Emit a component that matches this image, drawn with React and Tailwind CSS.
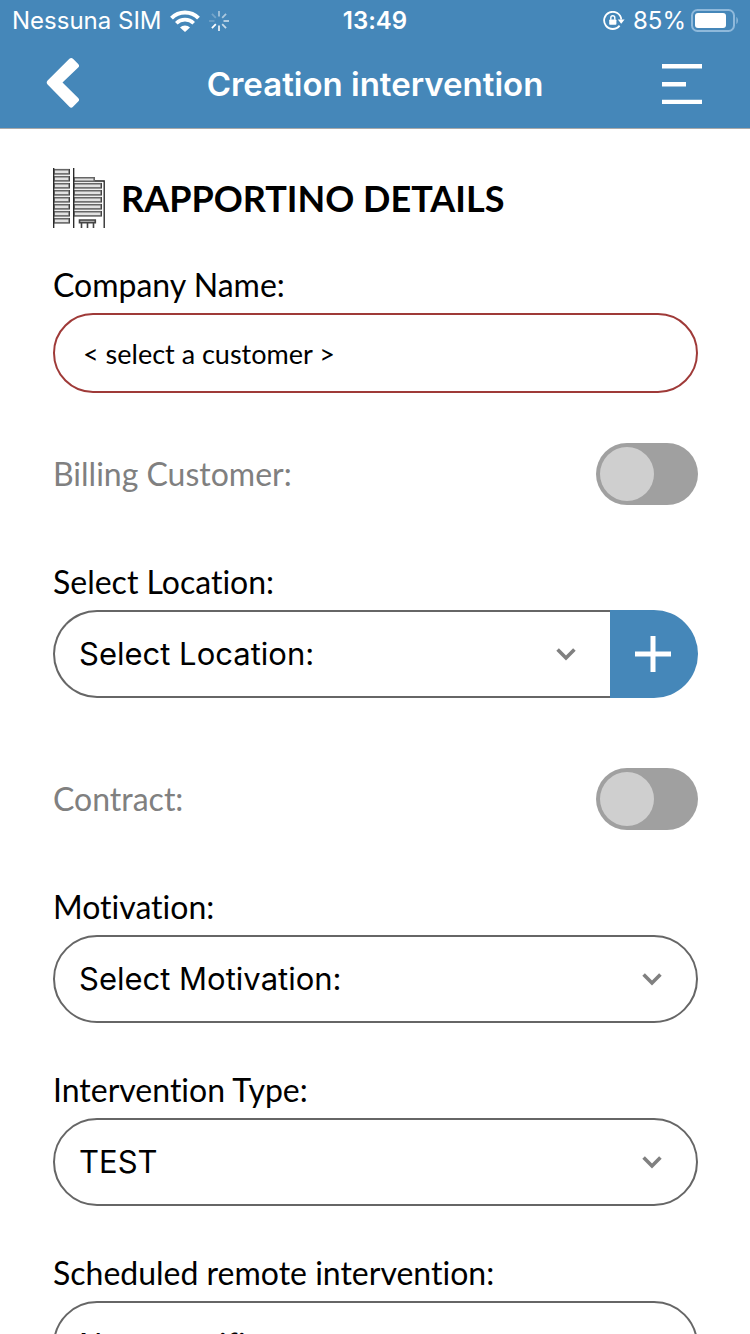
import React from "react";

const FLOORS = [1, 8, 15, 22, 29, 36, 43, 50];
const WINGS = [15, 22, 29, 36, 43];
const RAYS = [
  [0, 0.5],
  [45, 0.55],
  [90, 0.65],
  [135, 0.7],
  [180, 0.85],
  [225, 1],
  [270, 0.2],
  [315, 0.25],
];

function StatusBar() {
  return (
    <div className="grid h-10 grid-cols-3 items-center px-3 pt-0.5 font-['Inter','Liberation_Sans',sans-serif] text-2xl leading-9">
      <div className="flex items-center whitespace-nowrap">
        <span>Nessuna SIM</span>
        <svg className="ml-2 shrink-0" width="30" height="22" viewBox="0 0 30 22" fill="none" stroke="white" aria-hidden="true">
          <path d="M1.5 8.2a19 19 0 0 1 27 0" strokeWidth="4" />
          <path d="M6.3 13.2a12.3 12.3 0 0 1 17.4 0" strokeWidth="3.6" />
          <path d="M10 17.6a7 7 0 0 1 10 0L15 22z" fill="white" stroke="none" />
        </svg>
        <svg className="ml-2 shrink-0" width="22" height="22" viewBox="-11 -11 22 22" stroke="white" strokeWidth="1.8" aria-hidden="true">
          {RAYS.map(([angle, opacity]) => (
            <line key={angle} x1="0" y1="-4.5" x2="0" y2="-10" opacity={opacity} transform={`rotate(${angle})`} />
          ))}
        </svg>
      </div>
      <span className="text-center font-semibold">13:49</span>
      <div className="flex items-center justify-end whitespace-nowrap">
        <svg className="mr-2 shrink-0" width="22" height="20" viewBox="0 0 22 20" fill="none" aria-hidden="true">
          <path d="M16.600 14.600A8.6 8.6 0 1 1 18.300 8.600" stroke="white" strokeWidth="1.8" />
          <path d="M14.800 8.400h6.800L18.200 12.800z" fill="white" />
          <rect x="6.200" y="8.400" width="7.200" height="5.4" rx="0.8" fill="white" />
          <path d="M7.800 8.800V6.800a2 2 0 0 1 4 0v2" stroke="white" strokeWidth="1.4" />
        </svg>
        <span>85%</span>
        <svg className="ml-1 shrink-0" width="48" height="24" viewBox="0 0 48 24" aria-hidden="true">
          <rect x="2" y="1" width="42" height="21" rx="5.5" fill="none" stroke="#8fb9db" strokeWidth="2" />
          <rect x="5" y="4" width="31" height="15" rx="3" fill="white" />
          <path d="M46.400 8c2 1 2 6 0 7z" fill="#8fb9db" />
        </svg>
      </div>
    </div>
  );
}

function NavBar() {
  return (
    <div className="grid h-22 grid-cols-[1fr_auto_1fr] items-center px-[46px]">
      <button type="button" aria-label="Back" className="flex justify-self-start">
        <svg width="36" height="54" viewBox="0 0 36 54" fill="white" aria-hidden="true">
          <path d="M1.6 23.6 23.4 1.8q1.8-1.8 3.6 0l5.2 5.2q1.8 1.8 0 3.6L16.5 25.5 32.2 41q1.8 1.8 0 3.6l-5.2 5.2q-1.8 1.8-3.6 0L1.6 27.4q-1.8-1.9 0-3.8z" />
        </svg>
      </button>
      <h1 className="font-['Inter','Liberation_Sans',sans-serif] text-[33px] leading-10 font-semibold">Creation intervention</h1>
      <button type="button" aria-label="Menu" className="flex justify-self-end">
        <svg width="42" height="40" viewBox="0 0 42 40" fill="white" aria-hidden="true">
          <path d="M0 0h40v4.4H0zM0 18h24v4.6H0zM0 35.8h40V40H0z" />
        </svg>
      </button>
    </div>
  );
}

function BuildingIcon() {
  return (
    <svg className="shrink-0" width="52" height="60" viewBox="0 0 52 60" fill="#e2e2e2" stroke="#666" strokeWidth="1.6" aria-hidden="true">
      {FLOORS.map((y) => (
        <rect key={y} x="1" y={y + 0.7} width="15.2" height="4.200" />
      ))}
      <path d="M21 9.8h20.2v3.400H21z" />
      {WINGS.map((y) => (
        <rect key={y} x="21" y={y + 0.7} width="27.2" height="4.200" />
      ))}
      <path d="M26.5 52h15.800v2.800h-15.800z" stroke="#444" fill="#aaa" />
      <path d="M28.5 55v5M34.5 55v5M40.5 55v5" stroke="#444" />
      <path d="M16.500 1v5M16.500 8v5M16.500 15v5M16.500 22v5M16.500 29v5M16.500 36v5M16.500 43v5M16.500 50v5M48.500 15v5M48.500 22v5M48.500 29v5M48.500 36v5M48.500 43v5" stroke="#444" strokeWidth="1" />
      <path d="M.7 0v60M20.7 0v60M51.2 60V13H42" fill="none" stroke="#222" strokeWidth="1.3" />
    </svg>
  );
}

function Label({ htmlFor, children }) {
  return (
    <label htmlFor={htmlFor} className="mb-2 block text-[32px] leading-10">
      {children}
    </label>
  );
}

function Dropdown({ id, option, joined }) {
  return (
    <div className="relative min-w-0 flex-1">
      <select
        id={id}
        className={`block h-22 w-full appearance-none border-2 border-[#666] bg-white pr-20 pl-6 font-['Inter','Liberation_Sans',sans-serif] text-[31px] leading-10 text-black ${
          joined ? "rounded-l-full border-r-0" : "rounded-full"
        }`}
      >
        <option>{option}</option>
      </select>
      <svg
        className={`pointer-events-none absolute top-9 ${joined ? "right-[34px]" : "right-9"}`}
        width="20"
        height="16"
        viewBox="0 0 20 16"
        fill="none"
        stroke="#808080"
        strokeWidth="3.6"
        aria-hidden="true"
      >
        <path d="M1.6 3.5 10 12l8.400-8.500" />
      </svg>
    </div>
  );
}

function Toggle({ id, label }) {
  return (
    <div className="flex items-center justify-between">
      <label htmlFor={id} className="text-[32px] leading-10 text-[#808080]">
        {label}
      </label>
      <input
        id={id}
        type="checkbox"
        role="switch"
        disabled
        className="h-[62px] w-[102px] appearance-none rounded-full bg-[#a0a0a0] p-1 before:block before:size-[54px] before:rounded-full before:bg-[#cfcfcf] checked:before:ml-10"
      />
    </div>
  );
}

export default function App() {
  return (
    <div className="flex h-screen flex-col bg-white font-['Lato','Liberation_Sans',sans-serif] text-black [font-variant-ligatures:none]">
      <header className="shrink-0 border-b border-[#a9a9a9] bg-[#4587b9] text-white">
        <StatusBar />
        <NavBar />
      </header>
      <main className="min-h-0 flex-1 overflow-y-auto pt-[39px] pr-[52px] pb-12 pl-[53px] [scrollbar-width:none]">
        <div className="flex items-center gap-4">
          <BuildingIcon />
          <h2 className="text-[36px] leading-10 font-bold">RAPPORTINO DETAILS</h2>
        </div>
        <form>
          <div className="mt-[37px]">
            <Label htmlFor="company">Company Name:</Label>
            <input
              id="company"
              type="text"
              readOnly
              defaultValue="< select a customer >"
              className="block h-20 w-full rounded-full border-2 border-[#9f3a38] bg-white px-7 text-[27px] leading-10"
            />
          </div>
          <div className="mt-[50px]">
            <Toggle id="billing" label="Billing Customer:" />
          </div>
          <div className="mt-[57px]">
            <Label htmlFor="location">Select Location:</Label>
            <div className="flex">
              <Dropdown id="location" option="Select Location:" joined />
              <button type="button" aria-label="Add location" className="flex h-22 w-22 items-center justify-center rounded-r-full bg-[#4587b9] pr-0.5">
                <svg width="36" height="36" viewBox="0 0 36 36" stroke="white" strokeWidth="5" aria-hidden="true">
                  <path d="M18 0v36M0 18h36" />
                </svg>
              </button>
            </div>
          </div>
          <div className="mt-[70px]">
            <Toggle id="contract" label="Contract:" />
          </div>
          <div className="mt-[57px]">
            <Label htmlFor="motivation">Motivation:</Label>
            <Dropdown id="motivation" option="Select Motivation:" />
          </div>
          <div className="mt-[47px]">
            <Label htmlFor="type">Intervention Type:</Label>
            <Dropdown id="type" option="TEST" />
          </div>
          <div className="mt-[47px]">
            <Label htmlFor="remote">Scheduled remote intervention:</Label>
            <Dropdown id="remote" option="Non specificato" />
          </div>
        </form>
      </main>
    </div>
  );
}
